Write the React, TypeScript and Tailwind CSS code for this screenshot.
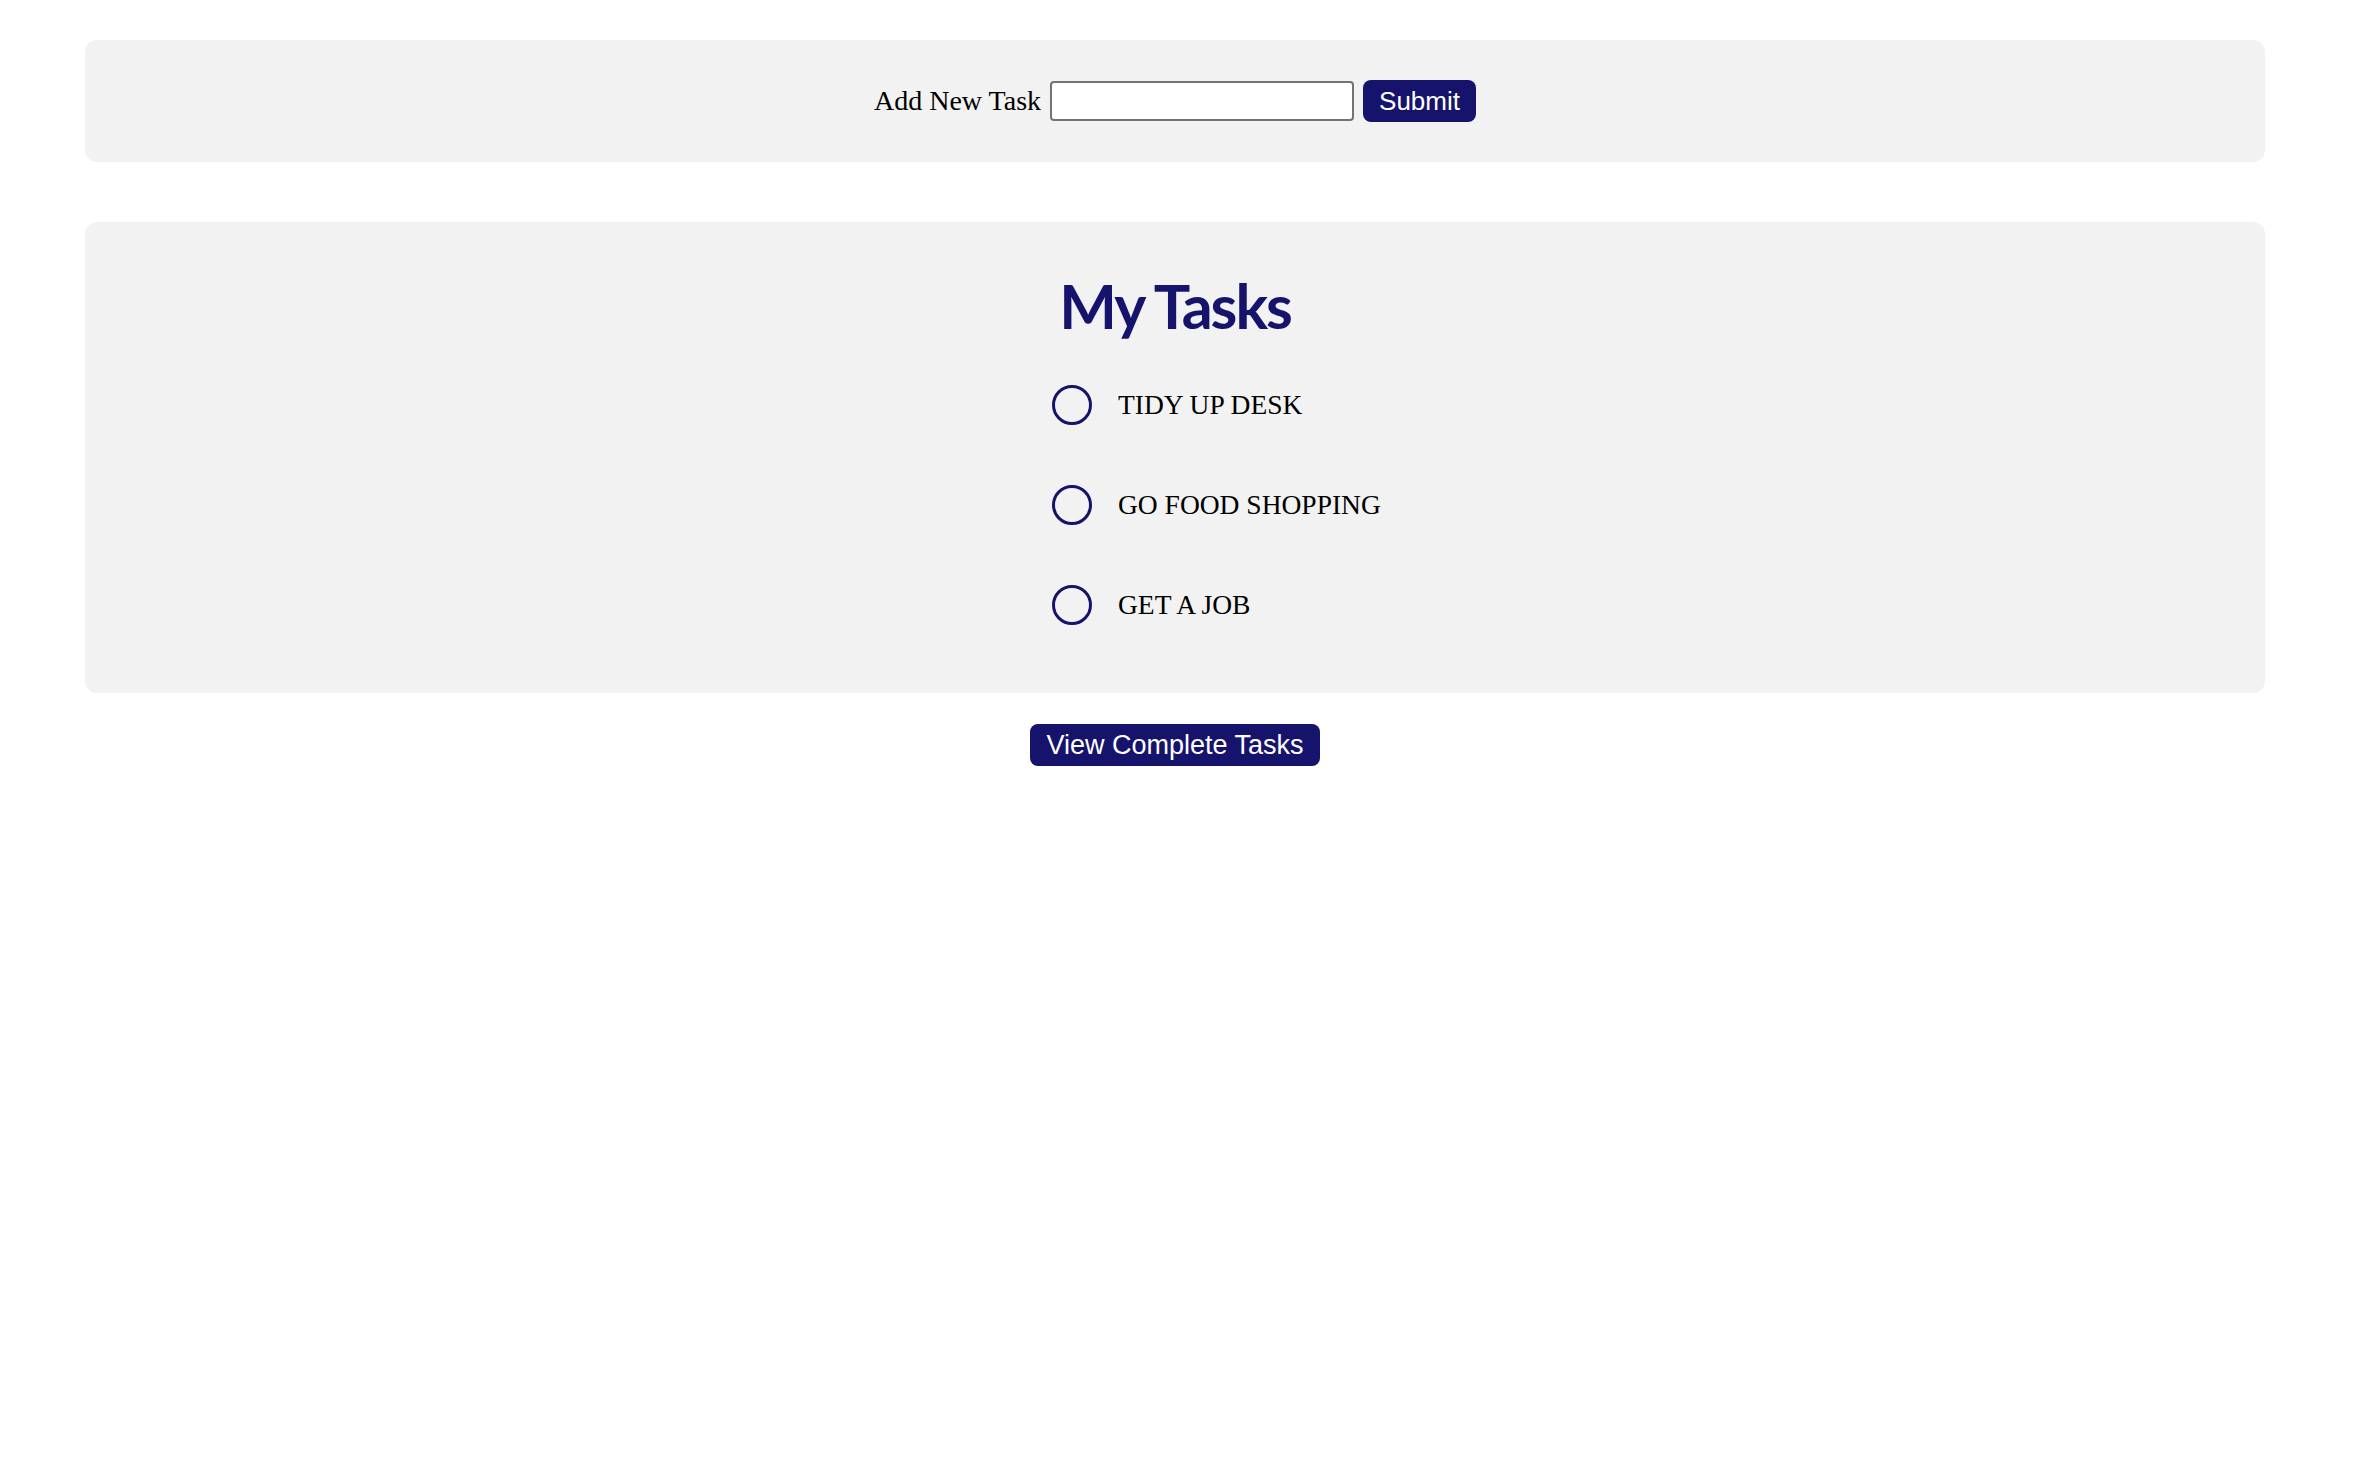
const tasks = ["TIDY UP DESK", "GO FOOD SHOPPING", "GET A JOB"];

const TaskRow = ({ label }: { label: string }) => {
  return (
    <li className="flex h-[40px] flex-row items-center gap-[26px]">
      <span className="h-[40px] w-[40px] shrink-0 rounded-full border-[3px] border-[#15136b]"></span>
      <span className="whitespace-nowrap font-['Liberation_Serif',serif] text-[27.5px] leading-none text-black">
        {label}
      </span>
    </li>
  );
};

export default function App() {
  return (
    <div className="min-h-screen w-full bg-white pt-[40px]">
      <div className="ml-[85px] mr-[91px] flex h-[122px] flex-row items-center justify-center gap-[9px] rounded-xl bg-[#f2f2f2]">
        <label className="font-['Liberation_Serif',serif] text-[28px] leading-none text-black">
          Add New Task
        </label>
        <input
          type="text"
          className="h-[40px] w-[304px] rounded-[4px] border-2 border-[#737373] bg-white px-2"
        />
        <button className="h-[42px] rounded-lg bg-[#15136b] px-[16px] font-['Liberation_Sans',Arial,sans-serif] text-[26px] leading-none text-white">
          Submit
        </button>
      </div>

      <div className="ml-[85px] mr-[91px] mt-[60px] flex flex-col items-center rounded-xl bg-[#f2f2f2] pb-[68px] pt-[53px]">
        <h1 className="h-[62px] font-['Lato',sans-serif] text-[61px] font-bold leading-[62px] tracking-[-2px] text-[#15136b]">
          My Tasks
        </h1>
        <ul className="mt-[48px] flex w-[246px] flex-col gap-[60px]">
          {tasks.map((t) => (
            <TaskRow key={t} label={t} />
          ))}
        </ul>
      </div>

      <div className="ml-[85px] mr-[91px] mt-[31px] flex justify-center">
        <button className="h-[42px] rounded-lg bg-[#15136b] px-[16px] font-['Liberation_Sans',Arial,sans-serif] text-[27px] leading-none text-white">
          View Complete Tasks
        </button>
      </div>
    </div>
  );
}
